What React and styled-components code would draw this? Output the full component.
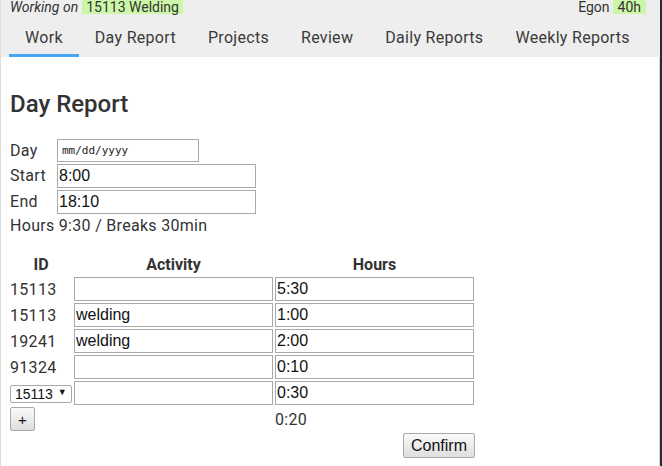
import React from "react";
import styled, { createGlobalStyle } from "styled-components";

const Global = createGlobalStyle`
  html, body { margin: 0; padding: 0; background: #fff; }
  body { font-family: Roboto, "Noto Sans", Arial, sans-serif; color: #333; }
  * { box-sizing: border-box; }
`;

const Frame = styled.div`
  width: 662px;
  height: 466px;
  border-left: 1px solid #dcdcdc;
  border-right: 2px solid #2b2b2b;
  box-shadow: inset -1px 0 0 #d6d6d6;
  overflow: hidden;
  display: flex;
  flex-direction: column;
`;

const Header = styled.header`
  background: #eeeeee;
  display: flex;
  flex-direction: column;
`;

const TopBar = styled.div`
  display: flex;
  justify-content: space-between;
  align-items: center;
  height: 14px;
  font-size: 14px;
  line-height: 14px;
  padding: 0 14px 0 9px;
  color: #333;
`;

const Status = styled.div`
  display: flex;
  align-items: center;
  gap: ${(p) => p.$gap || 4}px;
`;

const Italic = styled.span`
  font-style: italic;
`;

const Badge = styled.span`
  background: #ccf7a8;
  padding: 0 ${(p) => p.$pad || 4}px;
  height: 14px;
  display: inline-block;
`;

const Tabs = styled.nav`
  display: flex;
  padding-left: 8px;
`;

const Tab = styled.div`
  font-size: 16px;
  letter-spacing: 0.3px;
  line-height: 20px;
  padding: 14px 16px 6px 16px;
  color: #3a3a3a;
  border-bottom: 3px solid ${(p) => (p.$active ? "#47a3f3" : "transparent")};
`;

const Main = styled.main`
  padding: 0 9px;
  font-size: 16px;
  letter-spacing: 0.3px;
`;

const Title = styled.h1`
  margin: 33px 0 21px;
  font-size: 24px;
  letter-spacing: 0;
  line-height: 28px;
  font-weight: 500;
  color: #333;
`;

const FormGrid = styled.div`
  display: grid;
  grid-template-columns: 47px auto;
  row-gap: 2px;
  align-items: center;
  justify-items: start;
`;

const Label = styled.span`
  line-height: 20px;
`;

const TextInput = styled.input`
  width: ${(p) => p.$w || 199}px;
  height: ${(p) => p.$h || 24}px;
  border: 1px solid #a9a9a9;
  border-radius: 0;
  padding: 0 1px;
  margin: 0;
  font-family: "Liberation Sans", Arial, sans-serif;
  font-size: 16px;
  letter-spacing: 0;
  color: #111;
  background: #fff;
  outline: none;
`;

const DateInput = styled(TextInput)`
  font-family: "DejaVu Sans Mono", "Liberation Mono", monospace;
  font-size: 11px;
  padding-left: 4px;
  &::placeholder { color: #222; opacity: 1; }
`;

const Summary = styled.div`
  margin-top: 2px;
  line-height: 20px;
`;

const Table = styled.table`
  margin: 17px 0 0 -2px;
  border-collapse: separate;
  border-spacing: 2px;
`;

const Th = styled.th`
  padding: 0;
  line-height: 20px;
  font-weight: 700;
  letter-spacing: 0;
  color: #333;
  text-align: center;
  width: ${(p) => p.$w}px;
`;

const Td = styled.td`
  padding: 0;
  height: 24px;
  vertical-align: middle;
  text-align: ${(p) => p.$align || "left"};
`;

const SelectWrap = styled.div`
  position: relative;
  width: 62px;
  height: 18px;
  &::after {
    content: "▼";
    position: absolute;
    right: 5px;
    top: 3px;
    font-size: 9px;
    color: #111;
    pointer-events: none;
  }
`;

const Select = styled.select`
  appearance: none;
  width: 62px;
  height: 18px;
  border: 1px solid #a9a9a9;
  border-radius: 2px;
  background: #fff;
  font-family: "Liberation Sans", Arial, sans-serif;
  font-size: 14px;
  letter-spacing: 0;
  padding: 0 0 0 4px;
  color: #111;
  margin: 0;
`;

const Button = styled.button`
  height: ${(p) => p.$h || 24}px;
  width: ${(p) => p.$w}px;
  border: 1px solid #a9a9a9;
  border-radius: 2px;
  background: linear-gradient(#fafafa, #dedede);
  font-family: "Liberation Sans", Arial, sans-serif;
  font-size: ${(p) => p.$fs || 16}px;
  letter-spacing: 0;
  color: #111;
  padding: 0;
  margin: 0 ${(p) => p.$mr || 0}px 0 0;
`;

const rows = [
  { id: "15113", activity: "", hours: "5:30" },
  { id: "15113", activity: "welding", hours: "1:00" },
  { id: "19241", activity: "welding", hours: "2:00" },
  { id: "91324", activity: "", hours: "0:10" },
];

const tabs = ["Work", "Day Report", "Projects", "Review", "Daily Reports", "Weekly Reports"];

export default function App() {
  return (
    <>
      <Global />
      <Frame>
        <Header>
          <TopBar>
            <Status>
              <Italic>Working on</Italic>
              <Badge>15113 Welding</Badge>
            </Status>
            <Status $gap={3}>
              <span>Egon</span>
              <Badge $pad={5}>40h</Badge>
            </Status>
          </TopBar>
          <Tabs>
            {tabs.map((t, i) => (
              <Tab key={t} $active={i === 0}>
                {t}
              </Tab>
            ))}
          </Tabs>
        </Header>
        <Main>
          <Title>Day Report</Title>
          <FormGrid>
            <Label>Day</Label>
            <DateInput $w={142} $h={23} placeholder="mm/dd/yyyy" readOnly />
            <Label>Start</Label>
            <TextInput defaultValue="8:00" />
            <Label>End</Label>
            <TextInput defaultValue="18:10" />
          </FormGrid>
          <Summary>Hours 9:30 / Breaks 30min</Summary>
          <Table>
            <thead>
              <tr>
                <Th $w={62}>ID</Th>
                <Th $w={199}>Activity</Th>
                <Th $w={199}>Hours</Th>
              </tr>
            </thead>
            <tbody>
              {rows.map((r, i) => (
                <tr key={i}>
                  <Td>{r.id}</Td>
                  <Td>
                    <TextInput defaultValue={r.activity} />
                  </Td>
                  <Td>
                    <TextInput defaultValue={r.hours} />
                  </Td>
                </tr>
              ))}
              <tr>
                <Td>
                  <SelectWrap>
                    <Select defaultValue="15113">
                      <option>15113</option>
                      <option>19241</option>
                      <option>91324</option>
                    </Select>
                  </SelectWrap>
                </Td>
                <Td>
                  <TextInput defaultValue="" />
                </Td>
                <Td>
                  <TextInput defaultValue="0:30" />
                </Td>
              </tr>
              <tr>
                <Td>
                  <Button $w={25} $fs={15}>+</Button>
                </Td>
                <Td />
                <Td>0:20</Td>
              </tr>
              <tr>
                <Td />
                <Td />
                <Td $align="right">
                  <Button $w={72} $h={25} $mr={-1}>Confirm</Button>
                </Td>
              </tr>
            </tbody>
          </Table>
        </Main>
      </Frame>
    </>
  );
}
